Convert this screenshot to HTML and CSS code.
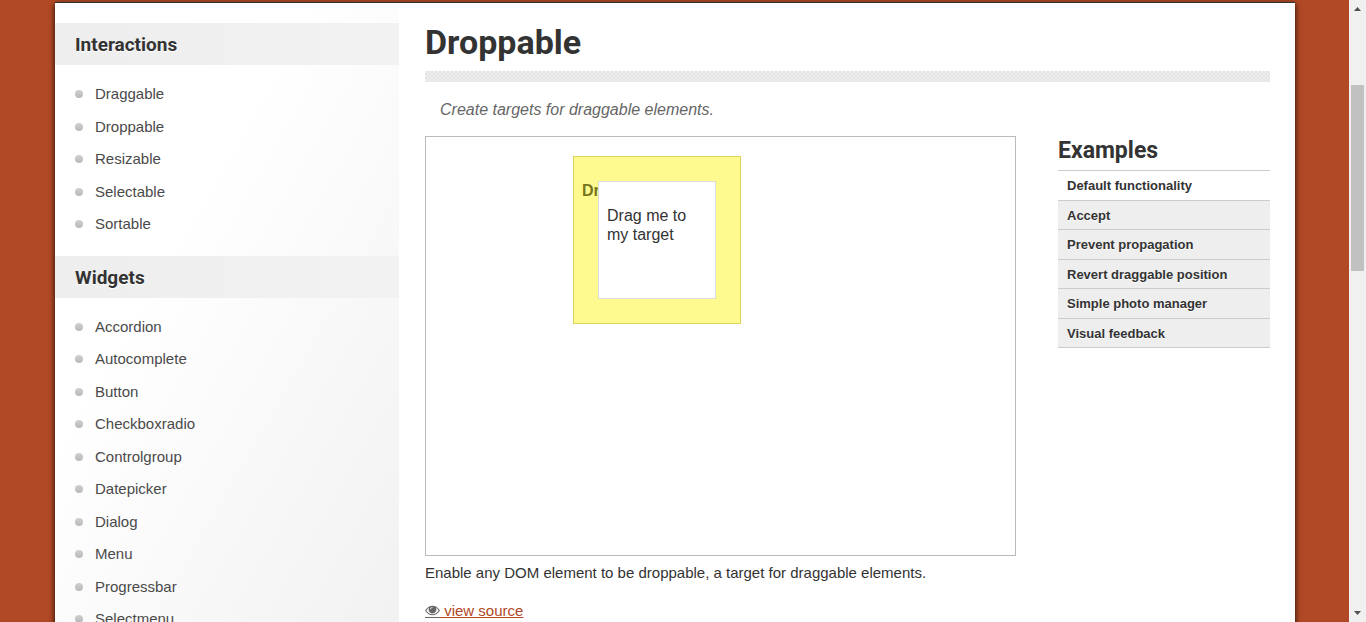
FILE: index.html
```html
<!DOCTYPE html>
<html lang="en">
<head>
<meta charset="utf-8">
<title>Droppable | jQuery UI</title>
<link rel="stylesheet" href="styles.css">
</head>
<body>
<div class="viewport">
  <div class="container">
    <aside class="sidebar">
      <h3 class="side-title">Interactions</h3>
      <ul class="side-list">
        <li><a href="#">Draggable</a></li>
        <li><a href="#">Droppable</a></li>
        <li><a href="#">Resizable</a></li>
        <li><a href="#">Selectable</a></li>
        <li><a href="#">Sortable</a></li>
      </ul>
      <h3 class="side-title">Widgets</h3>
      <ul class="side-list">
        <li><a href="#">Accordion</a></li>
        <li><a href="#">Autocomplete</a></li>
        <li><a href="#">Button</a></li>
        <li><a href="#">Checkboxradio</a></li>
        <li><a href="#">Controlgroup</a></li>
        <li><a href="#">Datepicker</a></li>
        <li><a href="#">Dialog</a></li>
        <li><a href="#">Menu</a></li>
        <li><a href="#">Progressbar</a></li>
        <li><a href="#">Selectmenu</a></li>
      </ul>
    </aside>
    <main class="content">
      <h1 class="title">Droppable</h1>
      <div class="divider"></div>
      <p class="intro">Create targets for draggable elements.</p>
      <div class="columns">
        <section class="demo">
          <div class="frame">
            <div class="droppable">
              <p>Dropped!</p>
              <div class="draggable"><p>Drag me to my target</p></div>
            </div>
          </div>
          <p class="description">Enable any DOM element to be droppable, a target for draggable elements.</p>
          <a class="source" href="#"><svg class="eye" viewBox="0 0 15 14" aria-hidden="true"><path fill-rule="evenodd" d="M0 5.500C2 2.300 4.500.7 7.500.7S13 2.300 15 5.500C13 8.700 10.500 10.300 7.500 10.300S2 8.700 0 5.500ZM1.300 5.500C2.800 7.900 5 9.200 7.500 9.200S12.200 7.900 13.700 5.500C12.900 4.100 11.900 3.100 10.700 2.500A3.800 3.800 0 1 1 4.300 2.500C3.100 3.100 2.100 4.100 1.300 5.500ZM7.500 2C6.200 2 5.200 3 5.200 4.300H6C6 3.400 6.600 2.800 7.500 2.800Z"/><path d="M0 12H15V13H0Z"/></svg> view source</a>
        </section>
        <aside class="examples">
          <h2>Examples</h2>
          <ul>
            <li class="active"><a href="#">Default functionality</a></li>
            <li><a href="#">Accept</a></li>
            <li><a href="#">Prevent propagation</a></li>
            <li><a href="#">Revert draggable position</a></li>
            <li><a href="#">Simple photo manager</a></li>
            <li><a href="#">Visual feedback</a></li>
          </ul>
        </aside>
      </div>
    </main>
  </div>
</div>
<div class="scrollbar" aria-hidden="true">
  <svg class="arrow" viewBox="0 0 7 4"><path d="M3.500 0L7 4H0Z"/></svg>
  <div class="track"><div class="thumb"></div></div>
  <svg class="arrow" viewBox="0 0 7 4"><path d="M0 0H7L3.500 4Z"/></svg>
</div>
</body>
</html>
```

FILE: styles.css
```css
* {
  box-sizing: border-box;
}

body {
  display: flex;
  height: 100vh;
  margin: 0;
  overflow: hidden;
  background: #b24926;
  color: #333;
  font: 15px/1.5 "Liberation Sans", Arial, sans-serif;
}

h1, h2, h3, p, ul {
  margin: 0;
}

ul {
  padding: 0;
  list-style: none;
}

a {
  color: inherit;
  text-decoration: none;
}

.viewport {
  flex: 1;
  min-width: 0;
  padding: 2px 54px 0 55px;
}

.container {
  display: flex;
  min-height: 100%;
  border-top: 1px solid #333;
  background: #fff;
  box-shadow: 0 2px 6px rgba(0, 0, 0, 0.9);
}

.sidebar {
  flex: 0 0 344px;
  padding-top: 20px;
  background: linear-gradient(120deg, #fff 35%, #f1f1f1);
}

.side-title {
  padding: 7px 20px 5px;
  background: linear-gradient(90deg, #eee, #f2f2f2);
  font: bold 19px/30px Roboto, sans-serif;
  text-shadow: 0 1px 0 #fff;
}

.side-list {
  padding: 13px 20px 15px;
}

.side-list li {
  display: flex;
  align-items: center;
  gap: 12px;
  padding: 5px 0;
  color: #4a4a4a;
}

.side-list li::before {
  content: "";
  width: 8px;
  height: 8px;
  border-radius: 50%;
  background: linear-gradient(#d0d0d0, #b8b8b8);
}

.content {
  flex: 1;
  min-width: 0;
  padding: 20px 25px 0 26px;
}

.title {
  font: bold 34px/38px Roboto, sans-serif;
}

.divider {
  height: 11px;
  margin-top: 10px;
  background: repeating-conic-gradient(#e2e2e2 0 25%, #f0f0f0 0 50%) 0 0 / 4px 4px;
}

.intro {
  padding: 16px 15px 14px;
  color: #666;
  font-size: 16px;
  font-style: italic;
}

.columns {
  display: grid;
  grid-template-columns: minmax(0, 1fr) 212px;
  gap: 42px;
}

.frame {
  height: 420px;
  padding: 19px 147px;
  border: 1px solid #bbb;
}

.droppable,
.draggable {
  padding: 24px 8px;
  font-size: 16px;
  line-height: 19px;
}

.droppable {
  position: relative;
  width: 168px;
  height: 168px;
  border: 1px solid #dad55e;
  background: #fffa90;
  color: #777620;
  font-weight: bold;
}

.draggable {
  position: absolute;
  top: 24px;
  left: 24px;
  width: 118px;
  height: 118px;
  border: 1px solid #ddd;
  background: #fff;
  color: #333;
  font-weight: normal;
}

.description {
  padding: 6px 0 15px;
}

.source {
  color: #b24926;
  text-decoration: underline;
}

.eye {
  width: 15px;
  height: 14px;
  fill: #666;
  vertical-align: -3px;
}

.examples h2 {
  padding: 1px 0 5px;
  font: bold 23px/28px Roboto, sans-serif;
}

.examples ul {
  border-top: 1px solid #ccc;
}

.examples li {
  padding: 5px 9px 4px;
  border-bottom: 1px solid #ccc;
  background: #eee;
  font-size: 13px;
  font-weight: bold;
  text-shadow: 0 1px 0 #fff;
}

.examples .active {
  background: #fff;
}

.scrollbar {
  display: flex;
  flex: 0 0 17px;
  flex-direction: column;
  align-items: center;
  padding: 7px 0;
  background: #f0f0f0;
}

.arrow {
  width: 7px;
  height: 4px;
  fill: #505050;
}

.track {
  flex: 1;
  width: 13px;
  padding-top: 74px;
}

.thumb {
  height: 186px;
  background: #c1c1c1;
}
```
